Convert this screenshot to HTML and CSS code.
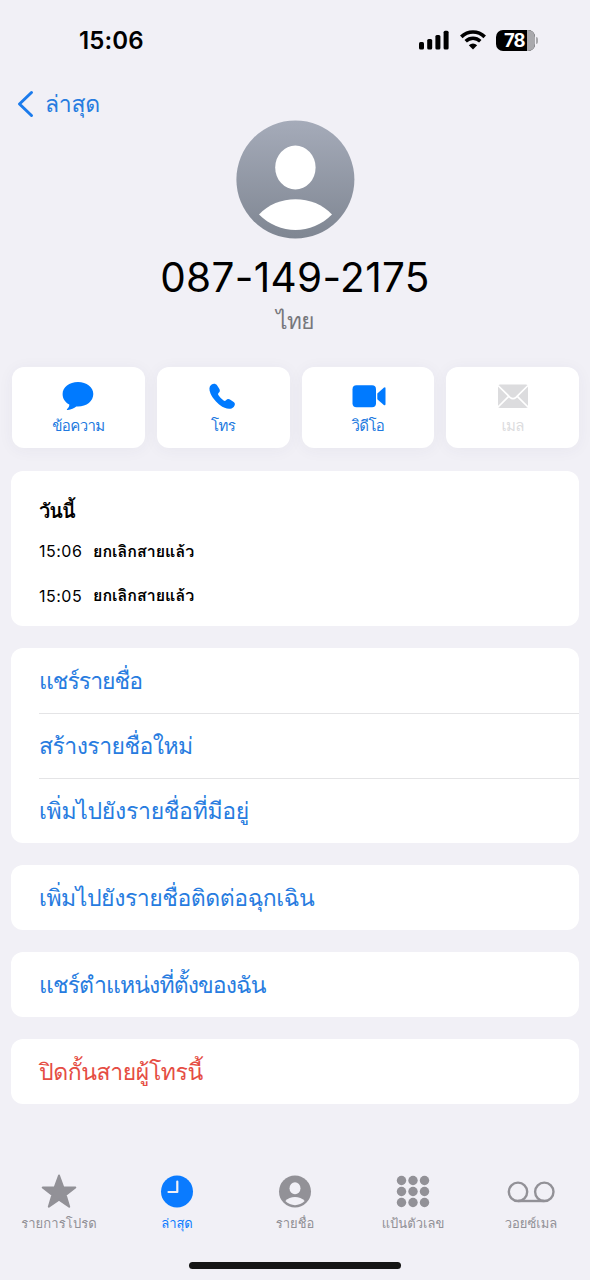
FILE: index.html
```html
<!DOCTYPE html>
<html lang="th">
<head>
<meta charset="utf-8">
<title>087-149-2175</title>
<link rel="stylesheet" href="styles.css">
</head>
<body>
<div class="screen">
  <header class="status">
    <span class="clock">15:06</span>
    <div class="indicators">
      <svg class="signal" width="31" height="20" viewBox="0 0 31 20"><rect x="0" y="12" width="5" height="7.500" rx="1.500"/><rect x="8.200" y="9" width="5" height="10.500" rx="1.500"/><rect x="16.400" y="5" width="5" height="14.500" rx="1.500"/><rect x="24.600" y="0.700" width="5" height="18.800" rx="1.500"/></svg>
      <svg class="wifi" width="26" height="20" viewBox="0 0 26 20"><path d="M1.300 6.900C8 .3 18 .3 24.700 6.900" fill="none" stroke="#000" stroke-width="3.600"/><path d="M5.700 11.300C10 7.300 16 7.300 20.300 11.300" fill="none" stroke="#000" stroke-width="3.500"/><path d="M8.800 15.300Q13 11.900 17.200 15.300L13 19.600Z"/></svg>
      <div class="battery"><span class="level">78</span><i class="rest"></i></div><i class="nub"></i>
    </div>
  </header>

  <nav class="back">
    <svg width="18" height="28" viewBox="0 0 18 28"><path d="M15.500 2.500 3.500 14l12 11.500" fill="none" stroke="#1b7bec" stroke-width="3" stroke-linecap="round" stroke-linejoin="round"/></svg>
    <span class="back-label">ล่าสุด</span>
  </nav>

  <section class="profile">
    <svg class="avatar" width="120" height="120" viewBox="0 0 120 120">
      <defs><linearGradient id="g" x1="0" y1="0" x2="0" y2="1"><stop offset="0" stop-color="#a5abb9"/><stop offset="1" stop-color="#7f8692"/></linearGradient></defs>
      <circle cx="60.400" cy="59.500" r="59" fill="url(#g)"/>
      <ellipse cx="60.400" cy="47.500" rx="20.200" ry="22" fill="#fff"/>
      <path d="M24 94.500C42 74 79 74 97 94.500C77 115 44 115 24 94.500Z" fill="#fff"/>
    </svg>
    <h1 class="number">087-149-2175</h1>
    <p class="country">ไทย</p>
  </section>

  <section class="actions">
    <div class="action">
      <svg width="36" height="30" viewBox="0 0 36 30"><path d="M18 1C9.300 1 2.600 6 2.600 13C2.600 17.800 5.300 21.500 9.300 23.600C9.500 25.300 8.500 26.700 7 28.200C6.500 28.800 7.100 29.200 7.800 29C11.300 28.500 14 27 16.300 25.400C25.900 26.100 33.300 20.500 33.300 13C33.300 6 26.600 1 18 1Z"/></svg>
      <span class="action-label">ข้อความ</span>
    </div>
    <div class="action">
      <svg width="36" height="30" viewBox="0 0 36 30"><path d="M6.300 3.800C8.300 2.300 10.600 2.300 12 4.300L14.100 7.400C15.300 9.200 15 10.500 13.700 11.800C12.900 12.700 12.900 13.300 13.500 14.300C14.500 16 16.800 18.300 18.600 19.500C19.600 20.100 20.200 20 21 19.200C22.300 17.900 23.700 17.700 25.300 18.800L28.700 21.100C30.400 22.400 30.200 24.300 28.700 25.900C25.500 29.100 20.300 27.900 14.800 23.900C11.700 21.600 7.500 17.100 5.500 12.500C3.900 8.500 4 5.600 6.300 3.800Z"/></svg>
      <span class="action-label">โทร</span>
    </div>
    <div class="action">
      <svg width="36" height="30" viewBox="0 0 36 30"><rect x="2.500" y="4.300" width="23.500" height="22" rx="4"/><path d="M27.300 12.500 33.800 6.700Q35.500 5.600 35.500 7.500V23Q35.500 25 33.800 23.900L27.300 18.200Z"/></svg>
      <span class="action-label">วิดีโอ</span>
    </div>
    <div class="action off">
      <svg width="36" height="30" viewBox="0 0 36 30"><rect x="3" y="3.500" width="30" height="23.500" rx="2"/><path d="M3 4.500 15 16.300Q18 19 21 16.300L33 4.500M3 26 13.700 15.300M33 26 22.300 15.300" fill="none" stroke="#fff" stroke-width="1.700"/></svg>
      <span class="action-label">เมล</span>
    </div>
  </section>

  <section class="card history">
    <h2 class="day">วันนี้</h2>
    <div class="call"><span class="time">15:06</span><b class="kind">ยกเลิกสายแล้ว</b></div>
    <div class="call"><span class="time">15:05</span><b class="kind">ยกเลิกสายแล้ว</b></div>
  </section>

  <section class="card">
    <div class="row"><span class="r1">แชร์รายชื่อ</span></div>
    <div class="row"><span class="r2">สร้างรายชื่อใหม่</span></div>
    <div class="row"><span class="r3">เพิ่มไปยังรายชื่อที่มีอยู่</span></div>
  </section>
  <section class="card"><div class="row"><span class="r4">เพิ่มไปยังรายชื่อติดต่อฉุกเฉิน</span></div></section>
  <section class="card"><div class="row"><span class="r5">แชร์ตำแหน่งที่ตั้งของฉัน</span></div></section>
  <section class="card"><div class="row danger"><span class="r6">ปิดกั้นสายผู้โทรนี้</span></div></section>

  <nav class="tabs">
    <div class="tab">
      <svg width="50" height="36" viewBox="0 0 50 36"><path d="M25 2.500 29.200 14.200 41.300 14.500 31.700 22 35.200 33.700 25 26.700 14.800 33.700 18.300 22 8.700 14.500 20.800 14.200Z" stroke="currentColor" stroke-width="2" stroke-linejoin="round"/></svg>
      <span class="t1">รายการโปรด</span>
    </div>
    <div class="tab active">
      <svg width="50" height="36" viewBox="0 0 50 36"><circle cx="25" cy="18.500" r="16"/><path d="M25.300 8.500V19H16.500" fill="none" stroke="#f1f0f6" stroke-width="2.200" stroke-linecap="round" stroke-linejoin="round"/></svg>
      <span>ล่าสุด</span>
    </div>
    <div class="tab">
      <svg width="50" height="36" viewBox="0 0 50 36"><circle cx="25" cy="18.500" r="16"/><ellipse cx="25" cy="15.300" rx="5.500" ry="6" fill="#f1f0f6"/><path d="M15.300 28C20 22.500 30 22.500 34.700 28C29.500 33.500 20.500 33.500 15.300 28Z" fill="#f1f0f6"/></svg>
      <span>รายชื่อ</span>
    </div>
    <div class="tab">
      <svg width="50" height="36" viewBox="0 0 50 36"><circle cx="13.500" cy="7.500" r="4.700"/><circle cx="25" cy="7.500" r="4.700"/><circle cx="36.500" cy="7.500" r="4.700"/><circle cx="13.500" cy="18.500" r="4.700"/><circle cx="25" cy="18.500" r="4.700"/><circle cx="36.500" cy="18.500" r="4.700"/><circle cx="13.500" cy="29.500" r="4.700"/><circle cx="25" cy="29.500" r="4.700"/><circle cx="36.500" cy="29.500" r="4.700"/></svg>
      <span>แป้นตัวเลข</span>
    </div>
    <div class="tab">
      <svg width="50" height="36" viewBox="0 0 50 36"><g fill="none" stroke="currentColor" stroke-width="2.400"><circle cx="12" cy="18.800" r="9.200"/><circle cx="38.300" cy="18.800" r="9.200"/><path d="M12 28H38.300"/></g></svg>
      <span>วอยซ์เมล</span>
    </div>
  </nav>
  <div class="home"></div>
</div>
</body>
</html>
```

FILE: styles.css
```css
* { box-sizing: border-box; }
body { margin: 0; background: #f1f0f6; font-family: Inter, Loma, "Noto Sans Thai Looped", "Noto Looped Thai", Garuda, Waree, Umpush, Laksaman, "Noto Serif Thai", "Noto Sans Thai", "Noto Sans", sans-serif; color: #000; }
h1, h2, p { margin: 0; font-weight: 400; }
i { font-style: normal; }
span, b { white-space: nowrap; }
.screen { width: 590px; height: 1280px; display: flex; flex-direction: column; overflow: hidden; }
.status { height: 80px; display: flex; justify-content: space-between; padding: 0 52px 0 79px; align-items: center; }
.clock { font-size: 24px; font-weight: 600; letter-spacing: 0.1px; padding-top: 1px; }
.indicators { display: flex; align-items: center; }
.wifi { margin: 0 10px; }
.battery { width: 39px; height: 21px; display: flex; border-radius: 7px; overflow: hidden; background: #000; }
.level { width: 31px; padding-left: 8px; color: #fff; font-size: 18.500px; font-weight: 700; line-height: 21px; letter-spacing: -1px; }
.rest { flex: 1; background: #a9a9ad; }
.nub { width: 2px; height: 7px; margin-left: 1px; background: #a9a9ad; border-radius: 0 2px 2px 0; }
.back { height: 40px; display: flex; align-items: center; gap: 11px; padding: 8px 0 0 16px; color: #277ce0; flex: none; }
.back-label { font-size: 23px; line-height: 32px; letter-spacing: -0.3px; }
.profile { height: 247px; display: flex; flex-direction: column; align-items: center; flex: none; }
.number { font-size: 40.500px; line-height: 50px; margin-top: 13px; letter-spacing: 0.35px; }
.country { font-size: 22.500px; line-height: 36px; color: #77777c; letter-spacing: -0.6px; }
.actions { display: grid; grid-template-columns: repeat(4, 1fr); gap: 12px; padding: 0 11px 0 12px; height: 81px; flex: none; }
.action { background: #fff; border-radius: 12px; display: flex; flex-direction: column; align-items: center; padding-top: 14px; fill: #007aff; color: #2179e0; box-shadow: 0 2px 16px rgba(60, 50, 90, .05); }
.action-label { font-size: 15px; line-height: 29px; letter-spacing: -0.6px; }
.off { fill: #dcdcde; color: #dcdcde; }
.card { background: #fff; border-radius: 12px; margin: 22px 11px 0; flex: none; }
.history { margin-top: 23px; height: 155px; padding: 22px 0 0 28px; }
.day { font-size: 20px; font-weight: 600; line-height: 36px; letter-spacing: -0.9px; }
.call { display: flex; align-items: center; height: 44.500px; }
.time { font-size: 16px; width: 54px; letter-spacing: 0.5px; }
.kind { font-size: 16px; font-weight: 700; letter-spacing: 0; }
.row { height: 65px; margin-left: 28px; display: flex; align-items: center; color: #277ce0; font-size: 23px; }
.row + .row { border-top: 1.500px solid #e4e4e6; }
.r1 { letter-spacing: -1px; }
.r2 { letter-spacing: -0.55px; }
.r3 { letter-spacing: -0.3px; }
.r4 { letter-spacing: -0.45px; }
.r5 { letter-spacing: -0.9px; }
.r6 { letter-spacing: -0.4px; }
.danger { color: #e54d43; }
.tabs { display: grid; grid-template-columns: repeat(5, 1fr); height: 64px; margin-top: 69px; flex: none; }
.tab { display: flex; flex-direction: column; align-items: center; color: #929197; fill: currentColor; font-size: 13px; font-weight: 500; line-height: 28px; }
.t1 { letter-spacing: 0.1px; }
.active { color: #0a7bff; }
.home { width: 212px; height: 7px; border-radius: 4px; background: #151515; margin: 25px auto 0; }
```
